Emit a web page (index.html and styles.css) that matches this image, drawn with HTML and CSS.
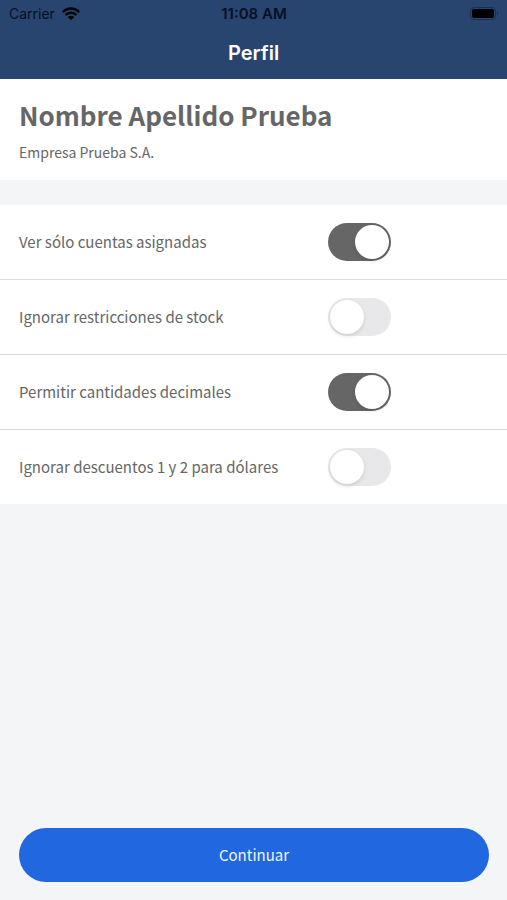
FILE: index.html
```html
<!DOCTYPE html>
<html lang="es">
<head>
<meta charset="utf-8">
<meta name="viewport" content="width=device-width, initial-scale=1">
<title>Perfil</title>
<link rel="stylesheet" href="styles.css">
</head>
<body>
<header class="header">
  <div class="status">
    <div class="carrier">
      <span>Carrier</span>
      <svg class="wifi" viewBox="0 0 18 13" aria-hidden="true">
        <path d="M0 4.2C5-1.2 13-1.2 18 4.2L16.3 5.9C12.2 1.6 5.8 1.6 1.7 5.9Z"/>
        <path d="M2.9 7.2C6.4 3.6 11.6 3.6 15.1 7.2L13.4 8.9C10.8 6.3 7.2 6.3 4.6 8.9Z"/>
        <path d="M5.7 10C7.6 8.2 10.4 8.2 12.3 10L9 13.2Z"/>
      </svg>
    </div>
    <span class="time">11:08 AM</span>
    <svg class="battery" viewBox="0 0 29 14" aria-hidden="true">
      <rect class="battery-shell" x="0.5" y="0.5" width="25" height="12" rx="3.5"/>
      <rect x="2" y="2" width="22" height="9" rx="2"/>
      <path class="battery-tip" d="M27 4.5C28.6 5 28.6 8 27 8.5Z"/>
    </svg>
  </div>
  <h1 class="title">Perfil</h1>
</header>
<main class="content">
  <section class="profile">
    <h2 class="name">Nombre Apellido Prueba</h2>
    <p class="company">Empresa Prueba S.A.</p>
  </section>
  <section class="settings">
    <div class="row">
      <label for="assigned">Ver sólo cuentas asignadas</label>
      <input class="switch" type="checkbox" role="switch" id="assigned" checked>
    </div>
    <div class="row">
      <label for="stock">Ignorar restricciones de stock</label>
      <input class="switch" type="checkbox" role="switch" id="stock">
    </div>
    <div class="row">
      <label for="decimals">Permitir cantidades decimales</label>
      <input class="switch" type="checkbox" role="switch" id="decimals" checked>
    </div>
    <div class="row">
      <label for="discounts">Ignorar descuentos 1 y 2 para dólares</label>
      <input class="switch" type="checkbox" role="switch" id="discounts">
    </div>
  </section>
</main>
<footer class="footer">
  <button class="continue" type="button">Continuar</button>
</footer>
</body>
</html>
```
FILE: styles.css
```css
* {
  box-sizing: border-box;
}

body {
  margin: 0;
  min-height: 100vh;
  display: flex;
  flex-direction: column;
  background: #f3f5f7;
  color: #666;
  font-family: "Noto Sans CJK SC", "Noto Sans", sans-serif;
  font-size: 15px;
  line-height: 24px;
}

.header {
  padding-bottom: 12px;
  background: #284570;
  font-family: Inter, "Liberation Sans", sans-serif;
}

.status {
  display: grid;
  grid-template-columns: 1fr auto 1fr;
  align-items: center;
  height: 27px;
  padding: 0 8px 0 9px;
  color: #06101f;
  font-size: 14px;
}

.carrier {
  display: flex;
  align-items: center;
  gap: 7px;
}

.wifi {
  width: 18px;
  height: 13px;
  fill: #000;
}

.time {
  font-size: 15px;
  font-weight: 600;
}

.battery {
  justify-self: end;
  width: 29px;
  height: 14px;
}

.battery-shell {
  fill: none;
  stroke: #1b3050;
}

.battery-tip {
  fill: #1b3050;
}

.title {
  margin: 0;
  padding-top: 12px;
  color: #fff;
  font-size: 20px;
  font-weight: 600;
  line-height: 28px;
  text-align: center;
}

.content {
  flex: 1;
}

.profile {
  padding: 18px 19px 16px;
  background: #fff;
}

.name {
  margin: 0 0 8px;
  font-size: 26px;
  font-weight: 700;
  line-height: 35px;
}

.company {
  margin: 0;
  font-size: 14px;
}

.settings {
  margin-top: 25px;
  background: #fff;
}

.row {
  display: grid;
  grid-template-columns: 1fr 160px;
  align-items: center;
  padding: 18px 19px;
}

.row + .row {
  border-top: 1px solid #dcdcde;
}

.switch {
  appearance: none;
  display: flex;
  align-items: center;
  width: 63px;
  height: 38px;
  margin: 0;
  padding: 0 2px;
  border-radius: 19px;
  background: #e8e8ea;
}

.switch::before {
  content: "";
  width: 34px;
  height: 34px;
  border-radius: 50%;
  background: #fff;
  box-shadow: 0 2px 4px rgba(0, 0, 0, 0.12);
}

.switch:checked {
  justify-content: flex-end;
  background: #666;
}

.footer {
  padding: 0 18px 18px 19px;
}

.continue {
  width: 100%;
  height: 54px;
  border: 0;
  border-radius: 27px;
  background: #2067e0;
  color: #f0f5ff;
  font: inherit;
}
```
